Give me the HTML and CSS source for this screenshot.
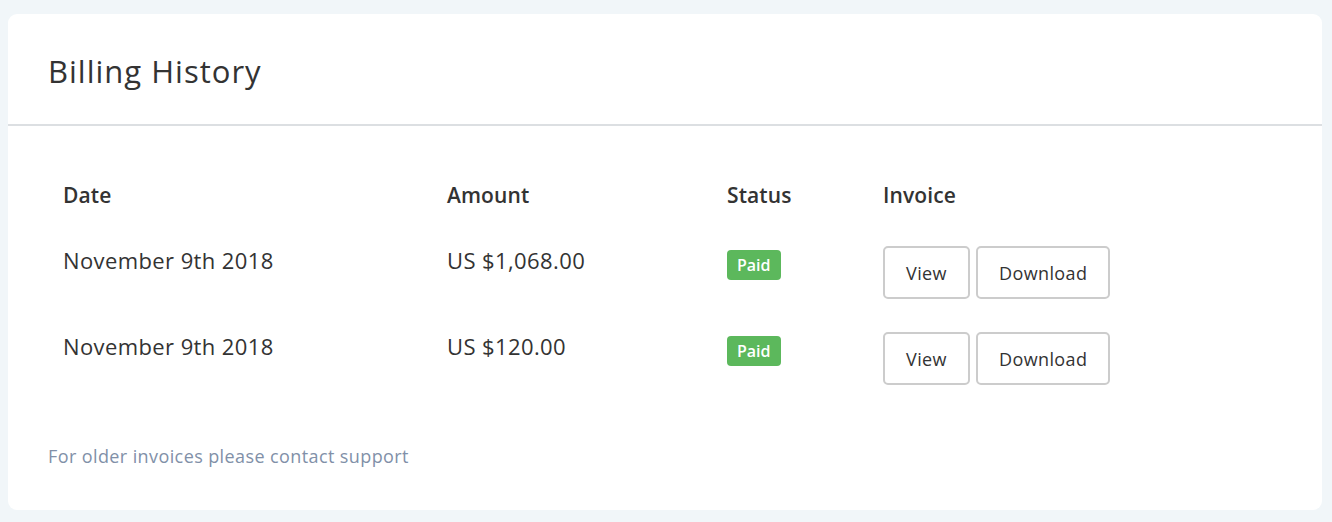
FILE: index.html
```html
<!DOCTYPE html>
<html lang="en">
<head>
<meta charset="utf-8">
<title>Billing History</title>
<link rel="stylesheet" href="styles.css">
</head>
<body>
<div class="card">
  <div class="card-header">
    <h1 class="title">Billing History</h1>
  </div>
  <div class="card-body">
    <div class="billing-table">
      <div class="row head">
        <div class="cell c-date">Date</div>
        <div class="cell c-amount">Amount</div>
        <div class="cell c-status">Status</div>
        <div class="cell c-invoice">Invoice</div>
      </div>
      <div class="row">
        <div class="cell c-date text">November 9th 2018</div>
        <div class="cell c-amount text">US $1,068.00</div>
        <div class="cell c-status"><span class="badge">Paid</span></div>
        <div class="cell c-invoice actions"><button class="btn">View</button><button class="btn">Download</button></div>
      </div>
      <div class="row">
        <div class="cell c-date text">November 9th 2018</div>
        <div class="cell c-amount text">US $120.00</div>
        <div class="cell c-status"><span class="badge">Paid</span></div>
        <div class="cell c-invoice actions"><button class="btn">View</button><button class="btn">Download</button></div>
      </div>
    </div>
    <p class="note">For older invoices please contact support</p>
  </div>
</div>
</body>
</html>
```
FILE: styles.css
```css
* { box-sizing: border-box; }
html, body { margin: 0; padding: 0; }
body {
  background: #f1f6f9;
  font-family: "Open Sans", "Lato", sans-serif;
  color: #333;
  padding: 14px 10px 12px 8px;
}
.card {
  background: #fff;
  border-radius: 9px;
  height: 496px;
}
.card-header {
  height: 112px;
  border-bottom: 2px solid #dcdfe2;
  display: flex;
  align-items: center;
  padding: 0 40px;
}
.title {
  margin: 0;
  font-weight: 400;
  font-size: 31px;
  letter-spacing: 1px;
  line-height: 40px;
  color: #333;
  padding-top: 4px;
}
.card-body {
  padding: 55px 40px 0 40px;
}
.billing-table {
  display: flex;
  flex-direction: column;
}
.row {
  display: grid;
  grid-template-columns: 384px 280px 156px 1fr;
  padding-left: 15px;
  align-items: start;
  height: 86px;
}
.row.head {
  height: 65px;
}
.cell {
  font-size: 21px;
  line-height: 28px;
}
.head .cell {
  font-weight: 600;
  letter-spacing: 0.1px;
}
.text {
  font-size: 22px;
  letter-spacing: 0.4px;
  padding-top: 0;
}
.badge {
  display: inline-block;
  margin-top: 4px;
  background: #5cb85c;
  color: #fff;
  font-weight: 600;
  font-size: 16px;
  line-height: 30px;
  height: 30px;
  padding: 0 10px;
  border-radius: 4px;
}
.actions {
  display: flex;
  gap: 6px;
}
.btn {
  font-family: inherit;
  font-size: 18px;
  letter-spacing: 0.4px;
  color: #333;
  background: #fff;
  border: 2px solid #ccc;
  border-radius: 5px;
  height: 53px;
  padding: 0 21px;
}
.note {
  margin: 26px 0 0 0;
  font-size: 18px;
  letter-spacing: 0.4px;
  line-height: 24px;
  color: #8190a8;
}
```
